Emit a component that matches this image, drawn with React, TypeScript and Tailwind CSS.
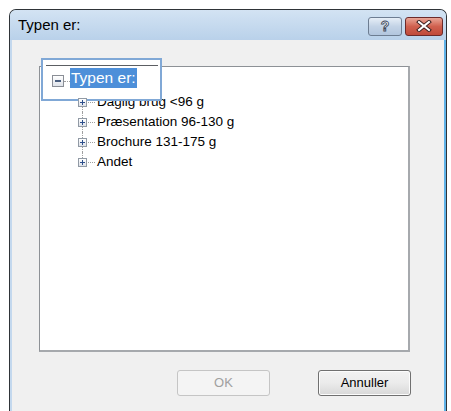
import React from "react";

// Win7-style "Typen er:" dialog with a tree view and a magnifier callout on the root node.

const items = ["Daglig brug <96 g", "Præsentation 96-130 g", "Brochure 131-175 g", "Andet"];

const dotV = "border-l border-dotted border-[#a0a0a0]";
const dotH = "border-t border-dotted border-[#a0a0a0]";

const ExpandBox = ({ open = false, big = false }: { open?: boolean; big?: boolean }) => (
  <div
    className={
      big
        ? "w-[12px] h-[12px] border border-[#8a8e96] bg-gradient-to-b from-white to-[#dfe3ea] flex items-center justify-center"
        : "w-[9px] h-[9px] border border-[#919aa5] bg-gradient-to-b from-white to-[#dde1e8] relative"
    }
  >
    {big ? (
      <div className="w-[6px] h-[2px] bg-[#4a5f80]" />
    ) : (
      <>
        <div className="absolute left-[1px] top-[3px] w-[5px] h-[1px] bg-[#2d4f8c]" />
        {!open && <div className="absolute left-[3px] top-[1px] w-[1px] h-[5px] bg-[#2d4f8c]" />}
      </>
    )}
  </div>
);

const ChildRow = ({ label, last }: { label: string; last: boolean }) => (
  <div className="h-[20px] flex items-center relative">
    {/* sibling connector */}
    <div className={`absolute left-[42px] top-0 ${last ? "h-[10px]" : "h-[20px]"} ${dotV}`} />
    <div className={`absolute left-[46px] top-[10px] w-[9px] ${dotH}`} />
    <div className="ml-[38px] z-10">
      <ExpandBox />
    </div>
    <span className="ml-[10px] text-[13.5px] text-black leading-none whitespace-nowrap">{label}</span>
  </div>
);

export default function App() {
  return (
    <div className="w-[451px] h-[411px] bg-white overflow-hidden relative font-['Liberation_Sans',Arial,sans-serif]">
      <div className="ml-[9px] mt-[9px] w-[438px] h-[420px] flex flex-col border border-b-0 border-[#2f3438] rounded-t-[7px] bg-[#c3d8ee]">
        {/* caption */}
        <div className="h-[30px] flex items-center pl-[8px] pr-[3px] bg-gradient-to-b from-[#d3e3f3] to-[#b9d1ea] rounded-t-[6px]">
          <span className="text-[15px] text-black">Typen er:</span>
          <div className="ml-auto flex items-center gap-[3px] mt-[2px]">
            <div className="w-[34px] h-[19px] rounded-[3px] border border-[#6d7d92] bg-gradient-to-b from-[#e6eef7] via-[#c3d3e6] to-[#b2c6de] flex items-center justify-center">
              <svg width="12" height="14" viewBox="0 0 12 14">
                <text x="6" y="12" textAnchor="middle" fontSize="14" fontWeight="bold" fontFamily="Liberation Sans" fill="#ffffff" stroke="#3d4a5c" strokeWidth="0.9">?</text>
              </svg>
            </div>
            <div className="w-[38px] h-[19px] rounded-[3px] border border-[#6b2a2a] bg-gradient-to-b from-[#e8a597] via-[#d0604e] to-[#c04a3b] flex items-center justify-center">
              <svg width="16" height="12" viewBox="0 0 16 12">
                <path d="M3 2 L13 10 M13 2 L3 10" stroke="#3b2020" strokeWidth="4" strokeLinecap="square" />
                <path d="M3 2 L13 10 M13 2 L3 10" stroke="#ffffff" strokeWidth="2" strokeLinecap="square" />
              </svg>
            </div>
          </div>
        </div>

        {/* client area */}
        <div className="flex-1 flex ml-[2px]">
          <div className="flex-1 bg-[#f0f0f0] flex flex-col">
            <div className="mt-[26px] ml-[27px] w-[371px] h-[286px] bg-white border border-[#8d9196] border-r-2 border-b-2 border-r-[#a6a9ad] border-b-[#a6a9ad] pt-[5px]">
              {/* root node (drawn enlarged in the callout) */}
              <div className="h-[20px] flex items-center relative">
                <div className="ml-[19px]">
                  <ExpandBox open />
                </div>
                <div className={`w-[6px] ${dotH}`} />
                <span className="ml-[2px] text-[13.5px] text-black leading-none invisible">Typen er:</span>
              </div>
              {items.map((label, i) => (
                <ChildRow key={label} label={label} last={i === items.length - 1} />
              ))}
            </div>

            <div className="mt-[18px] flex justify-end gap-[48px] pr-[33px]">
              <div className="w-[93px] h-[26px] rounded-[3px] border border-[#c5c5c5] bg-[#f4f4f4] flex items-center justify-center text-[13px] text-[#a0a0a0]">
                OK
              </div>
              <div className="w-[93px] h-[26px] rounded-[3px] border border-[#707070] bg-gradient-to-b from-[#f2f2f2] via-[#ebebeb] to-[#d8d8d8] flex items-center justify-center text-[13px] text-black shadow-[inset_0_0_0_1px_#fcfcfc]">
                Annuller
              </div>
            </div>
          </div>
          <div className="w-[2px] bg-[#5fb2e8]" />
        </div>
      </div>

      {/* magnifier callout over the root node */}
      <div className="absolute left-[41px] top-[58px] w-[121px] h-[43px] border-2 border-[#80a8d6] bg-white">
        <div className="absolute left-[3px] top-[5px] w-[112px] h-[1px] bg-[#5c5f63]" />
        <div className="absolute left-[9px] top-[15px]">
          <ExpandBox big />
        </div>
        <div className={`absolute left-[21px] top-[21px] w-[6px] ${dotH}`} />
        <div className="absolute left-[27px] top-[8px] h-[20px] w-[67px] bg-[#4d8fd9] flex items-center pl-[1px]">
          <span className="text-[15.5px] text-white leading-none whitespace-nowrap">Typen er:</span>
        </div>
      </div>
    </div>
  );
}
